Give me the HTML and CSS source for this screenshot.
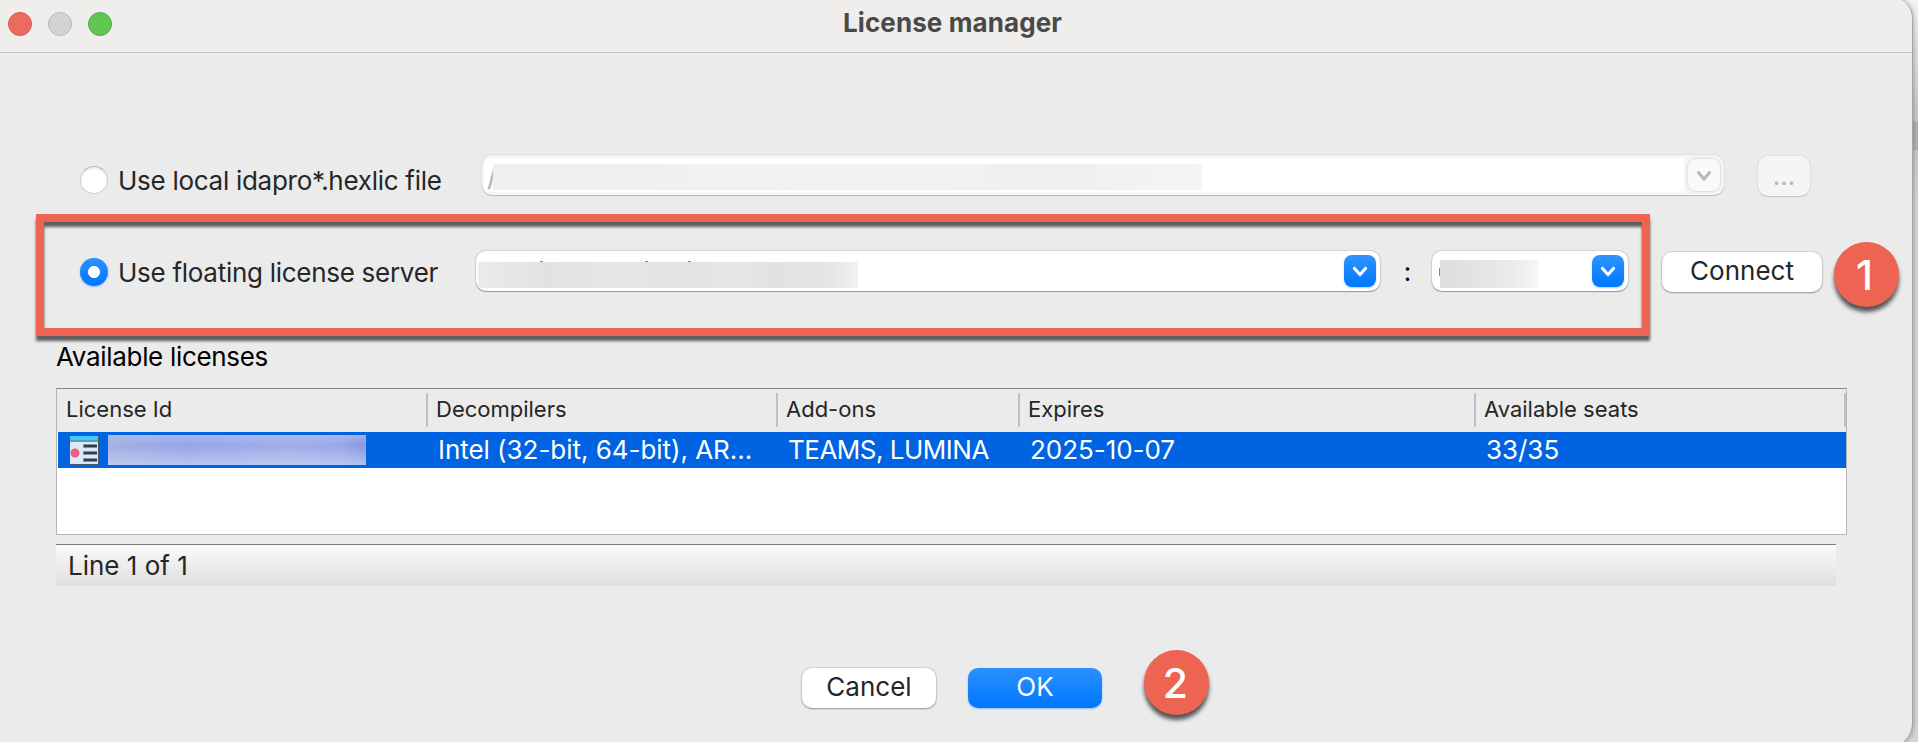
FILE: index.html
```
<!DOCTYPE html>
<html lang="en">
<head>
<meta charset="utf-8">
<title>License manager</title>
<link rel="stylesheet" href="styles.css">
</head>
<body>
<div class="desktop-strip"></div>
<main class="window">
  <header class="titlebar">
    <div class="lights"><i class="light close"></i><i class="light minimize"></i><i class="light maximize"></i></div>
    <h1 class="title">License manager</h1>
  </header>

  <section class="row local">
    <label class="choice"><i class="radio"></i><span>Use local idapro*.hexlic file</span></label>
    <div class="combo disabled path">
      <div class="field"><span class="slash">/</span><i class="redact r-path"></i></div>
      <button class="arrow"><svg viewBox="0 0 32 32"><path d="M10.5 13.5l5.5 6.5 5.5-6.5"/></svg></button>
    </div>
    <button class="button browse"><span>...</span></button>
  </section>

  <section class="row server">
    <label class="choice"><i class="radio checked"></i><span>Use floating license server</span></label>
    <div class="combo host">
      <i class="redact r-host"></i><i class="tick k1"></i><i class="tick k2"></i><i class="tick k3"></i>
      <button class="arrow"><svg viewBox="0 0 32 32"><path d="M10.5 13.5l5.5 6 5.5-6"/></svg></button>
    </div>
    <span class="colon">:</span>
    <div class="combo port">
      <i class="redact r-port"></i><i class="tick k4"></i>
      <button class="arrow"><svg viewBox="0 0 32 32"><path d="M10.5 13.5l5.5 6 5.5-6"/></svg></button>
    </div>
    <button class="button connect"><span>Connect</span></button>
    <div class="highlight"></div>
    <div class="badge one">1</div>
  </section>

  <h2 class="caption">Available licenses</h2>
  <div class="table">
    <div class="tr head">
      <div>License Id</div><div>Decompilers</div><div>Add-ons</div><div>Expires</div><div>Available seats</div>
    </div>
    <div class="tr selected">
      <div class="id-cell">
        <svg class="doc" viewBox="0 0 30 30">
          <rect x=".5" y=".5" width="29" height="29" fill="#dce8f5" stroke="#46586a"/>
          <path fill="#3dcbfa" d="M1 1h28v4H1z"/><path fill="#5a9db5" d="M1 5h28v2H1z"/>
          <circle cx="6" cy="18" r="4.5" fill="#e85f86"/>
          <path fill="#8494a3" d="M14 9h14v4H14zM14 16h14v4H14zM14 23h14v4H14z"/>
          <path fill="#2f3d4b" d="M15 10h13v2H15zM15 17h13v2H15zM15 24h13v2H15z"/>
        </svg>
        <i class="r-id"></i>
      </div>
      <div>Intel (32-bit, 64-bit), AR...</div><div class="caps">TEAMS, LUMINA</div><div>2025-10-07</div><div>33/35</div>
    </div>
  </div>
  <div class="status">Line 1 of 1</div>

  <footer class="actions">
    <button class="button"><span>Cancel</span></button>
    <button class="button primary"><span>OK</span></button>
    <div class="badge two">2</div>
  </footer>
</main>
</body>
</html>
```
FILE: styles.css
```
* { box-sizing: border-box; }
body {
  margin: 0;
  height: 742px;
  overflow: hidden;
  position: relative;
  background: #d2d2d2;
  font: 26px/32px Inter, "Liberation Sans", sans-serif;
  color: #262626;
}
span { white-space: pre; }
button { font: inherit; color: inherit; border: 0; padding: 0; }
.desktop-strip {
  position: absolute;
  right: 0;
  top: 0;
  width: 40px;
  height: 742px;
  background: linear-gradient(#f2f2f2 0, #c6c6c6 122px, #b1b1b1 122px, #b1b1b1 150px, #cacaca 150px, #d4d4d4 200px);
}
.window {
  position: relative;
  width: 1913px;
  height: 750px;
  margin-top: -3px;
  border-right: 1px solid #a6a6a6;
  border-radius: 0 22px 24px 0;
  background: #ebebeb;
  overflow: hidden;
  box-shadow: 0 0 5px rgba(0, 0, 0, .35);
}
.titlebar {
  position: relative;
  height: 56px;
  padding-top: 3px;
  background: #efeeec;
  border-bottom: 1px solid #c6c4c1;
}
.lights { display: flex; gap: 16px; padding: 12px 0 0 8px; }
.light { width: 24px; height: 24px; border-radius: 50%; border: 1px solid; }
.close { background: #ed6a5e; border-color: #d9574b; }
.minimize { background: #d5d4d2; border-color: #b9b8b6; }
.maximize { background: #61c554; border-color: #52a943; }
.title {
  position: absolute;
  inset: 10px 7px 0 0;
  margin: 0;
  font-size: 26px;
  line-height: 32px;
  font-weight: 700;
  letter-spacing: .1px;
  color: #494948;
  text-align: center;
}
.row { display: flex; position: relative; padding-left: 80px; align-items: center; height: 40px; }
.local { margin-top: 102px; }
.server { margin-top: 56px; }
.choice { display: flex; align-items: center; gap: 10px; width: 396px; padding-top: 2px; letter-spacing: -.28px; }
.choice span { padding-top: 2px; }
.local .choice { width: 402px; padding-top: 10px; }
.radio {
  width: 28px;
  height: 28px;
  border-radius: 50%;
  background: #fff;
  border: 1px solid #d0d0d0;
  border-top-color: #b8b8b8;
  box-shadow: inset 0 2px 2px rgba(0, 0, 0, .08);
}
.checked {
  border: 0;
  background: radial-gradient(circle, #fff 5.6px, transparent 6.4px), linear-gradient(#2c90ff, #0076fe);
  box-shadow: 0 1px 2px rgba(0, 110, 255, .4);
}
.combo {
  position: relative;
  display: flex;
  justify-content: flex-end;
  align-items: center;
  height: 40px;
  padding-right: 4px;
  border-radius: 10px;
  background: #fff;
  box-shadow: 0 0 1px 1px rgba(0, 0, 0, .1), 0 1px 1px rgba(0, 0, 0, .3);
}
.path { width: 1242px; background: #f5f5f5; box-shadow: 0 0 1px 1px rgba(0, 0, 0, .04), 0 1px 1px rgba(0, 0, 0, .18); }
.host { width: 904px; }
.port { width: 196px; }
.field {
  position: relative;
  width: 1200px;
  height: 34px;
  margin-right: 4px;
  background: #fff;
  border-radius: 6px 0 0 6px;
}
.slash { position: absolute; left: 3px; top: 2px; color: #b5b5b5; font-size: 29px; }
.redact { position: absolute; height: 26px; }
.r-path { left: 9px; top: 6px; width: 709px; background: linear-gradient(90deg, #efefef, #f1f1f1 35%, #f2f2f2 60%, #efefef 80%, #f5f5f5); }
.r-host { left: 2px; top: 11px; width: 380px; background: linear-gradient(90deg, #ebebeb, #e2e2e2 18%, #e6e6e6 35%, #e3e3e3 58%, #e7e7e7 68%, #e2e2e2 78%, #e5e5e5 93%, #f2f2f2); }
.r-port { left: 8px; top: 9px; width: 98px; height: 28px; background: linear-gradient(90deg, #dedede, #e4e4e4 40%, #ebebeb 75%, #f7f7f7); }
.tick { position: absolute; top: 10px; width: 3px; height: 1px; background: #888; }
.k1 { left: 64px; }
.k2 { left: 169px; }
.k3 { left: 212px; }
.k4 { left: 7px; top: 17px; width: 1px; height: 8px; }
.arrow {
  width: 32px;
  height: 32px;
  border-radius: 8px;
  background: linear-gradient(#2f94ff, #0077ff);
  box-shadow: 0 1px 2px rgba(0, 110, 255, .35);
}
.arrow svg { display: block; width: 32px; height: 32px; fill: none; stroke: #fff; stroke-width: 3.2; stroke-linecap: round; stroke-linejoin: round; }
.disabled .arrow { background: #fafafa; box-shadow: 0 0 2px 1px rgba(0, 0, 0, .1); }
.disabled .arrow svg { stroke: #b9b9b9; }
.button {
  display: flex;
  justify-content: center;
  align-items: center;
  width: 134px;
  height: 40px;
  padding-bottom: 2px;
  border-radius: 10px;
  background: #fff;
  box-shadow: 0 0 1px 1px rgba(0, 0, 0, .09), 0 1px 2px rgba(0, 0, 0, .3);
}
.browse { width: 52px; margin: 2px 0 0 34px; padding: 0; background: #f5f5f5; color: #b5b5b5; box-shadow: 0 0 1px 1px rgba(0, 0, 0, .05), 0 1px 1px rgba(0, 0, 0, .12); }
.connect { width: 160px; margin: 2px 0 0 34px; }
.primary { color: #fff; background: linear-gradient(#2c90ff, #0077ff); box-shadow: 0 1px 2px rgba(0, 110, 255, .4); }
.colon { width: 52px; padding: 1px 0 0 3px; text-align: center; color: #000; }
.highlight {
  position: absolute;
  left: 36px;
  top: -37px;
  width: 1614px;
  height: 122px;
  border: 8px solid #ed6453;
  filter: drop-shadow(0 5px 1.5px rgba(0, 0, 0, .6));
}
.badge {
  position: absolute;
  width: 65px;
  height: 65px;
  border-radius: 50%;
  background: #ed6453;
  color: #fff;
  font-size: 41px;
  font-weight: 500;
  line-height: 67px;
  text-align: center;
  box-shadow: 0 5px 4px rgba(0, 0, 0, .65);
}
.one { left: 1834px; top: -9px; padding-right: 4px; }
.two { left: 1144px; top: -18px; padding-right: 2px; }
.caption { margin: 50px 0 0 56px; font-size: 26px; line-height: 32px; font-weight: 400; letter-spacing: -.32px; color: #000; }
.table {
  width: 1791px;
  height: 147px;
  margin: 15px 0 0 56px;
  border: 1px solid #b4b4b4;
  border-top-color: #888;
  background: #fff;
}
.tr { display: grid; grid-template-columns: 371px 350px 242px 456px 1fr; }
.head { height: 43px; padding: 4px 0 5px; background: #ebebeb; font-size: 22px; }
.head div { height: 34px; border-right: 2px solid #c0c0c0; padding-left: 8px; line-height: 32px; }
.head div:first-child { padding-left: 9px; }
.selected { height: 36px; margin-left: 1px; background: #0063e1; color: #fff; line-height: 36px; letter-spacing: -.04px; }
.selected div { padding-left: 9px; }
.selected .caps { letter-spacing: -.5px; }
.selected .id-cell { display: flex; gap: 9px; align-items: center; padding-left: 11px; }
.doc { width: 30px; height: 30px; }
.r-id { width: 258px; height: 30px; background: linear-gradient(rgba(200, 205, 240, .4), transparent 35%, rgba(210, 218, 245, .6)), linear-gradient(90deg, #a3afe3, #95a5e8 30%, #9fade9 70%, #98a7e8 90%, #8797e3); }
.status {
  width: 1780px;
  height: 42px;
  margin: 9px 0 0 56px;
  padding-left: 12px;
  border-top: 1px solid #7d7d7d;
  background: linear-gradient(#fafafa, #dfdfdf);
  line-height: 42px;
}
.actions { position: relative; display: flex; gap: 32px; padding-left: 802px; margin-top: 82px; }
```
